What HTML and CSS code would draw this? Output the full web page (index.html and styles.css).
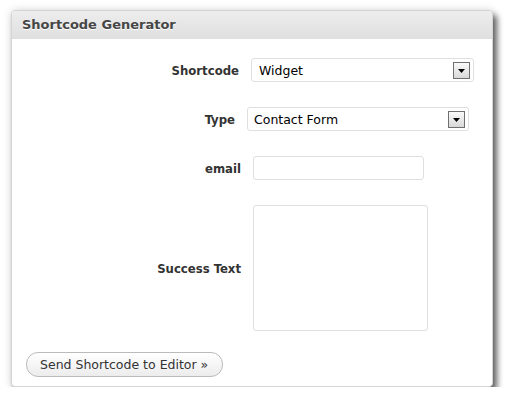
FILE: index.html
```html
<!DOCTYPE html>
<html>
<head>
<meta charset="utf-8">
<link rel="stylesheet" href="styles.css">
</head>
<body>
<div class="panel">
  <div class="panel-header">Shortcode Generator</div>
  <div class="panel-body">
    <div class="row">
      <label class="label label-w1">Shortcode</label>
      <div class="select select-w1">
        <span class="select-value">Widget</span>
        <span class="select-arrow"><svg width="7" height="4" viewBox="0 0 7 4"><path d="M0 0H7L3.5 4Z" fill="#000"/></svg></span>
      </div>
    </div>
    <div class="row">
      <label class="label label-w2">Type</label>
      <div class="select select-w2">
        <span class="select-value">Contact Form</span>
        <span class="select-arrow"><svg width="7" height="4" viewBox="0 0 7 4"><path d="M0 0H7L3.5 4Z" fill="#000"/></svg></span>
      </div>
    </div>
    <div class="row">
      <label class="label">email</label>
      <div class="input"></div>
    </div>
    <div class="row">
      <label class="label">Success Text</label>
      <div class="textarea"></div>
    </div>
    <div class="actions">
      <button class="button">Send Shortcode to Editor »</button>
    </div>
  </div>
</div>
</body>
</html>
```

FILE: styles.css
```css
html, body {
  margin: 0;
  padding: 0;
  background: #ffffff;
}
body {
  padding: 10px 0 0 11px;
  font-family: "DejaVu Sans", Verdana, sans-serif;
  font-size: 12.5px;
  color: #333;
}
.panel {
  width: 482px;
  height: 377px;
  box-sizing: border-box;
  background: #fff;
  border: 1px solid #d4d4d4;
  border-radius: 4px;
  box-shadow: 4px 5px 6px rgba(0,0,0,0.6), 0 0 10px rgba(0,0,0,0.14);
  overflow: hidden;
  display: flex;
  flex-direction: column;
}
.panel-header {
  height: 28px;
  flex: none;
  background: linear-gradient(#ededed, #dfdfdf);
  font-family: "DejaVu Sans", Verdana, sans-serif;
  font-weight: bold;
  font-size: 13px;
  color: #464646;
  text-shadow: 0 1px 0 #fff;
  line-height: 28px;
  padding-left: 10px;
}
.panel-body {
  padding: 19px 0 0 14px;
  display: flex;
  flex-direction: column;
  gap: 25px;
}
.row {
  display: flex;
  align-items: center;
  gap: 12px;
}
.label {
  width: 215px;
  text-align: right;
  font-family: "DejaVu Sans Condensed", "DejaVu Sans", sans-serif;
  font-stretch: condensed;
  font-weight: bold;
  font-size: 13px;
  color: #333;
}
.label-w1 { width: 213px; }
.label-w2 { width: 209px; }
.select {
  height: 24px;
  box-sizing: border-box;
  border: 1px solid #dfdfdf;
  border-radius: 3px;
  background: #fff;
  display: flex;
  align-items: center;
  justify-content: space-between;
  padding: 0 3px 0 7px;
  color: #000;
}
.select-w1 { width: 223px; }
.select-w2 { width: 222px; padding-left: 6px; }
.select-arrow {
  width: 17px;
  height: 17px;
  box-sizing: border-box;
  border: 1px solid #6f6f6f;
  background: linear-gradient(#fafafa, #d8d8d8);
  display: flex;
  align-items: center;
  justify-content: center;
  padding-top: 2px;
}
.select-arrow svg { display: block; }
.input {
  width: 171px;
  height: 24px;
  box-sizing: border-box;
  border: 1px solid #dfdfdf;
  border-radius: 3px;
  background: #fff;
}
.textarea {
  width: 175px;
  height: 126px;
  box-sizing: border-box;
  border: 1px solid #dfdfdf;
  border-radius: 3px;
  background: #fff;
}
.actions {
  margin-top: -4px;
  display: flex;
}
.button {
  width: 197px;
  height: 25px;
  box-sizing: border-box;
  border: 1px solid #bbbbbb;
  border-radius: 12px;
  background: linear-gradient(#ffffff, #ececec);
  font-family: "DejaVu Sans", Verdana, sans-serif;
  font-size: 12.5px;
  color: #333;
  padding: 0 0 0 13px;
  text-align: left;
  white-space: nowrap;
}
```
